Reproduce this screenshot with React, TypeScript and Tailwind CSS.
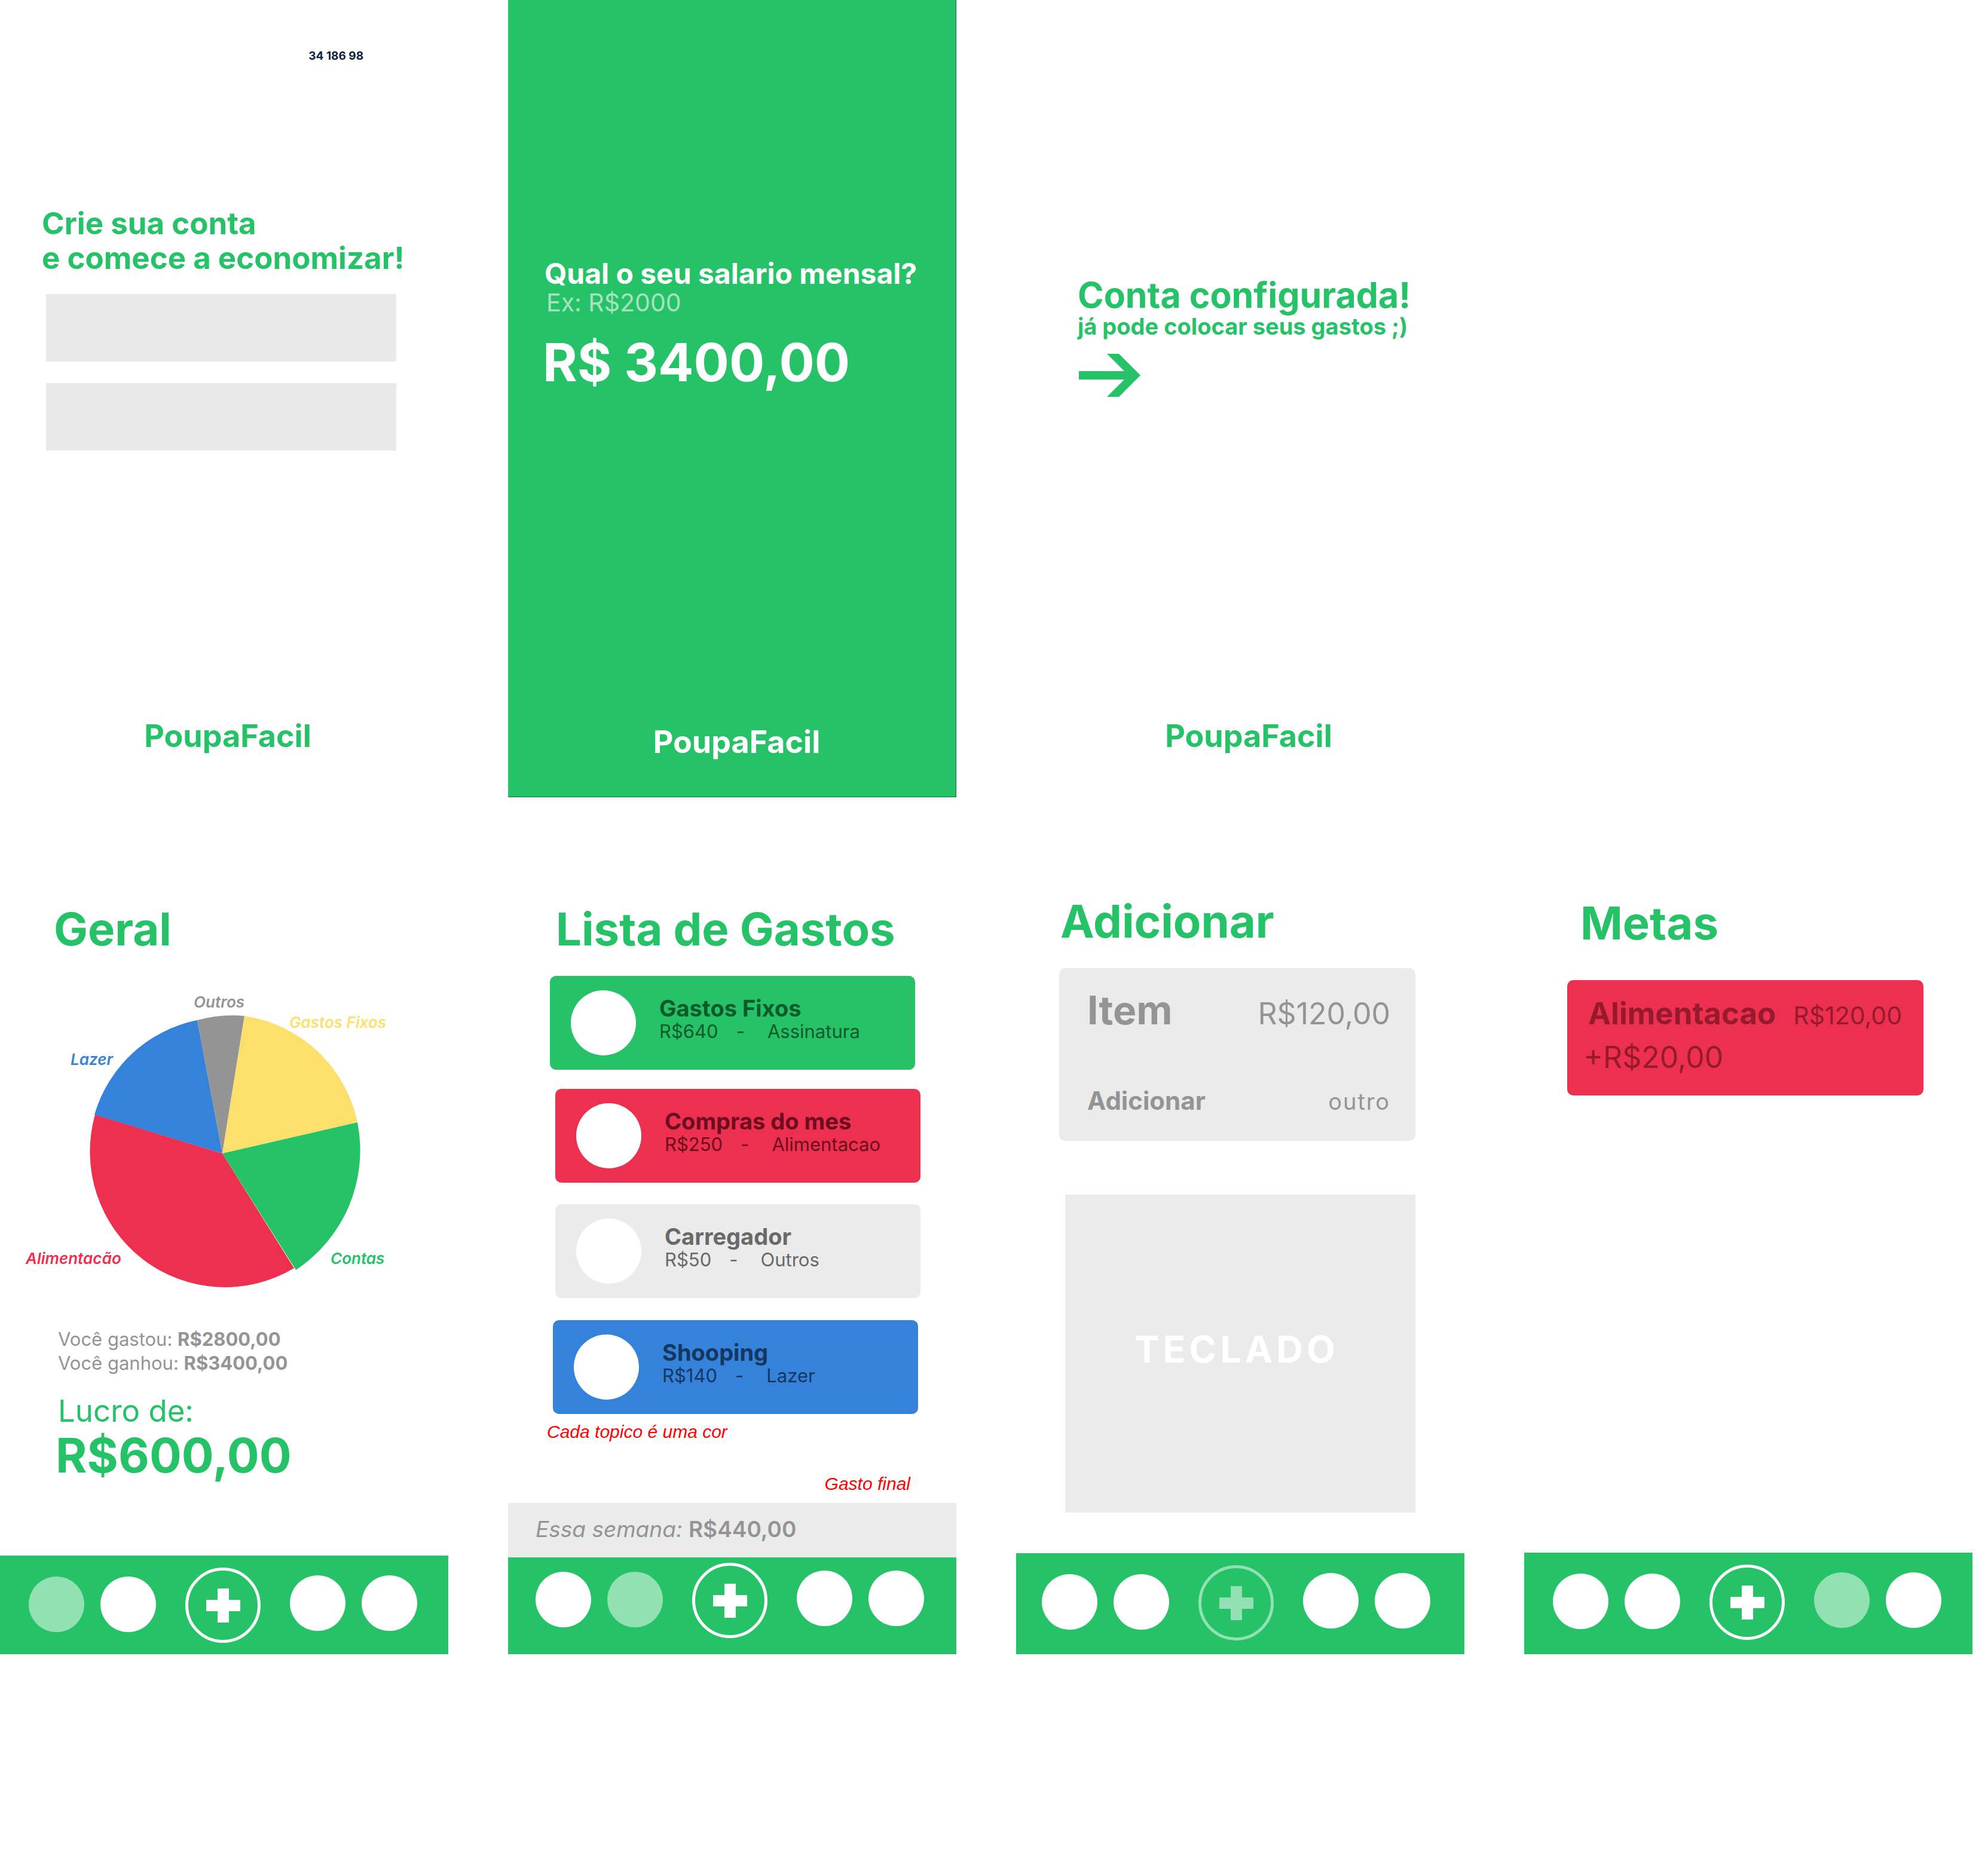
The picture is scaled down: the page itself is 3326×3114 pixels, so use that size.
import type { ReactNode } from "react";

function Screen({ className = "", children }: { className?: string; children: ReactNode }) {
  return <section className={`flex min-h-[1334px] flex-col ${className}`}>{children}</section>;
}

function Title({ className, children }: { className: string; children: ReactNode }) {
  return <h2 className={`text-[76px] leading-[80px] font-bold text-[#25c267] ${className}`}>{children}</h2>;
}

function Brand({ className }: { className: string }) {
  return <p className={`mt-auto text-center text-[52px] leading-[58px] font-bold ${className}`}>PoupaFacil</p>;
}

const tabs = ["Geral", "Lista de Gastos", "Adicionar", "Metas", "Perfil"];

function TabDot({ label, active }: { label: string; active: boolean }) {
  return (
    <button
      type="button"
      aria-label={label}
      className={`size-[93px] rounded-full ${active ? "bg-white/50" : "bg-white"}`}
    />
  );
}

function NavBar({ active, className }: { active: number; className: string }) {
  return (
    <nav className={`flex items-start bg-[#25c267] ${className}`}>
      <div className="flex h-[126px] items-center gap-[49px]">
        <div className="flex gap-[27px] pb-1">
          <TabDot label={tabs[0]} active={active === 0} />
          <TabDot label={tabs[1]} active={active === 1} />
        </div>
        <button
          type="button"
          aria-label={tabs[2]}
          className={`flex size-[126px] items-center justify-center rounded-full border-[5px] ${
            active === 2 ? "border-white/50 text-[#92e0b3]" : "border-white text-white"
          }`}
        >
          <svg viewBox="0 0 57 57" className="size-[57px]" fill="currentColor" aria-hidden="true">
            <path d="M19 0H38V19H57V38H38V57H19V38H0V19H19Z" />
          </svg>
        </button>
        <div className="flex gap-[27px] pb-2">
          <TabDot label={tabs[3]} active={active === 3} />
          <TabDot label={tabs[4]} active={active === 4} />
        </div>
      </div>
    </nav>
  );
}

const slices = [
  { name: "Outros", label: "left-[174px] -top-[38px] text-[#949494]" },
  { name: "Gastos Fixos", label: "left-[334px] -top-[4px] text-[#fce06b]" },
  { name: "Lazer", label: "-left-[32px] top-[58px] text-[#3482d9]" },
  { name: "Alimentacão", label: "-left-[107px] top-[391px] text-[#ed304f]" },
  { name: "Contas", label: "left-[403px] top-[391px] text-[#25c267]" },
];

function SpendingChart() {
  return (
    <div className="relative mt-[105px] ml-[150px] w-[452px]">
      <svg viewBox="0 0 452 455" className="w-full overflow-visible" aria-hidden="true">
        <path d="M222 231L342 423A226 227 0 0 1 9 166Z" fill="#ed304f" />
        <path d="M222 231L8 166A226 226 0 0 1 180 8Z" fill="#3482d9" />
        <path d="M222 231L180 8A227 227 0 0 1 259 1Z" fill="#949494" />
        <path d="M222 231L259 1A227 227 0 0 1 448 179Z" fill="#fce06b" />
        <path d="M222 231L448 179A240 240 0 0 1 345 426Z" fill="#25c267" />
      </svg>
      {slices.map((s) => (
        <span key={s.name} className={`absolute text-[26px] leading-[32px] font-semibold whitespace-nowrap italic ${s.label}`}>
          {s.name}
        </span>
      ))}
    </div>
  );
}

const expenses = [
  { name: "Gastos Fixos", value: "R$640", topic: "Assinatura", card: "mt-[39px] ml-[70px] mr-[69px] bg-[#25c267] text-[#0b5a2a]" },
  { name: "Compras do mes", value: "R$250", topic: "Alimentacao", card: "mt-[32px] ml-[79px] mr-[60px] bg-[#ed304f] text-[#6b0d1e]" },
  { name: "Carregador", value: "R$50", topic: "Outros", card: "mt-[36px] ml-[79px] mr-[60px] bg-[#ebebeb] text-[#696969]" },
  { name: "Shooping", value: "R$140", topic: "Lazer", card: "mt-[37px] ml-[75px] mr-[64px] bg-[#3482d9] text-[#15375f]" },
];

export default function App() {
  return (
    <main className="min-h-screen bg-white font-['Inter',sans-serif]">
      <div className="grid grid-cols-4 gap-[100px] pr-[26px]">
        <Screen className="text-[#25c267]">
          <p className="mt-[82px] mr-[142px] self-end text-[19px] leading-[24px] font-bold text-[#0d2240]">34 186 98</p>
          <h1 className="mt-[239px] ml-[70px] text-[51px] leading-[58px] font-bold">
            Crie sua conta
            <br />e comece a economizar!
          </h1>
          <form className="mt-[31px] mr-[87px] ml-[77px] flex flex-col gap-9">
            <input aria-label="E-mail" className="h-[113px] bg-[#e9e9e9] px-8 text-[36px]" />
            <input aria-label="Senha" type="password" className="h-[113px] bg-[#e9e9e9] px-8 text-[36px]" />
          </form>
          <Brand className="pb-[73px] pl-3" />
        </Screen>

        <Screen className="border-r border-b border-[#0b7038] bg-[#25c267] text-white">
          <label htmlFor="salary" className="mt-[434px] ml-[61px] text-[48px] leading-[48px] font-bold whitespace-nowrap">
            Qual o seu salario mensal?
          </label>
          <p className="ml-[64px] text-[41px] leading-[48px] text-[#a8e3c1]">Ex: R$2000</p>
          <input
            id="salary"
            defaultValue="R$ 3400,00"
            className="mt-7 mr-10 ml-[58px] h-24 bg-transparent text-[88px] font-bold"
          />
          <Brand className="pb-[62px] pl-4" />
        </Screen>

        <Screen className="text-[#25c267]">
          <h1 className="mt-[464px] ml-[103px] text-[59px] leading-[60px] font-bold">Conta configurada!</h1>
          <p className="ml-[103px] text-[38px] leading-[44px] font-bold">já pode colocar seus gastos ;)</p>
          <button type="button" aria-label="Continuar" className="mt-6 ml-[105px] self-start">
            <svg viewBox="0 0 103 72" className="w-[103px]" fill="currentColor" aria-hidden="true">
              <path d="M47 0H67L103 36L67 72H47L76 43H0V29H76Z" />
            </svg>
          </button>
          <Brand className="pb-[73px] pl-7" />
        </Screen>

        <div />

        <Screen>
          <Title className="mt-20 ml-[90px]">Geral</Title>
          <SpendingChart />
          <div className="mt-[67px] ml-[97px] text-[31px] leading-[40px] text-[#949494]">
            <p>
              Você gastou: <b>R$2800,00</b>
            </p>
            <p>
              Você ganhou: <b>R$3400,00</b>
            </p>
          </div>
          <p className="mt-8 ml-[97px] text-[51px] leading-[56px] text-[#25c267]">Lucro de:</p>
          <p className="mt-0.5 ml-[93px] text-[80px] leading-[88px] font-bold text-[#25c267]">R$600,00</p>
          <NavBar active={0} className="mt-auto h-[165px] pt-5 pl-12" />
        </Screen>

        <Screen>
          <Title className="mt-20 ml-[80px]">Lista de Gastos</Title>
          <ul>
            {expenses.map((e) => (
              <li key={e.name} className={`flex h-[157px] gap-[39px] rounded-[10px] pt-6 pl-[35px] ${e.card}`}>
                <span className="size-[109px] shrink-0 rounded-full bg-white" />
                <div className="pt-[9px]">
                  <h3 className="text-[38px] leading-[42px] font-bold">{e.name}</h3>
                  <p className="flex text-[31px] leading-[36px]">
                    <span>{e.value}</span>
                    <span className="mr-[38px] ml-[30px]">-</span>
                    <span>{e.topic}</span>
                  </p>
                </div>
              </li>
            ))}
          </ul>
          <p className="mt-3 ml-[65px] font-['Liberation_Sans',sans-serif] text-[30px] leading-[36px] text-[#ff0000] italic">
            Cada topico é uma cor
          </p>
          <p className="mt-[51px] mr-[77px] text-right font-['Liberation_Sans',sans-serif] text-[30px] leading-[36px] text-[#ff0000] italic">
            Gasto final
          </p>
          <div className="mt-auto flex h-[91px] items-center bg-[#ebebeb] pb-1 pl-[46px] text-[37px] text-[#949494]">
            <p>
              <i>Essa semana:</i> <span className="font-semibold">R$440,00</span>
            </p>
          </div>
          <NavBar active={1} className="h-[162px] pt-[9px] pl-[46px]" />
        </Screen>

        <Screen>
          <Title className="mt-[67px] ml-[74px]">Adicionar</Title>
          <div className="mt-[39px] mr-[82px] ml-[72px] flex h-[289px] flex-col justify-between rounded-[10px] bg-[#ebebeb] pt-[34px] pr-[42px] pb-[42px] pl-[47px] text-[#949494]">
            <div className="flex items-baseline justify-between">
              <span className="text-[66px] leading-[72px] font-bold">Item</span>
              <span className="text-[50px] leading-[60px]">R$120,00</span>
            </div>
            <div className="flex items-baseline justify-between">
              <button type="button" className="text-[42px] leading-[48px] font-bold">
                Adicionar
              </button>
              <button type="button" className="text-[38px] leading-[48px] tracking-wider">
                outro
              </button>
            </div>
          </div>
          <div className="mt-[90px] mr-[82px] ml-[82px] flex h-[532px] items-center justify-center bg-[#ebebeb] pr-3 pb-4 text-[62px] font-bold tracking-widest text-white">
            TECLADO
          </div>
          <NavBar active={2} className="mt-auto h-[169px] pt-5 pl-[43px]" />
        </Screen>

        <Screen>
          <Title className="mt-[70px] ml-[94px]">Metas</Title>
          <div className="mt-[56px] mr-[82px] ml-[72px] h-[193px] rounded-[10px] bg-[#ed304f] pt-7 pr-9 pl-[27px] text-[#951a2d]">
            <div className="flex items-baseline justify-between pl-2">
              <span className="text-[51px] leading-[56px] font-bold">Alimentacao</span>
              <span className="text-[41px] leading-[56px]">R$120,00</span>
            </div>
            <p className="mt-3 text-[50px] leading-[60px]">+R$20,00</p>
          </div>
          <NavBar active={3} className="mt-auto h-[170px] pt-5 pl-12" />
        </Screen>
      </div>
    </main>
  );
}
